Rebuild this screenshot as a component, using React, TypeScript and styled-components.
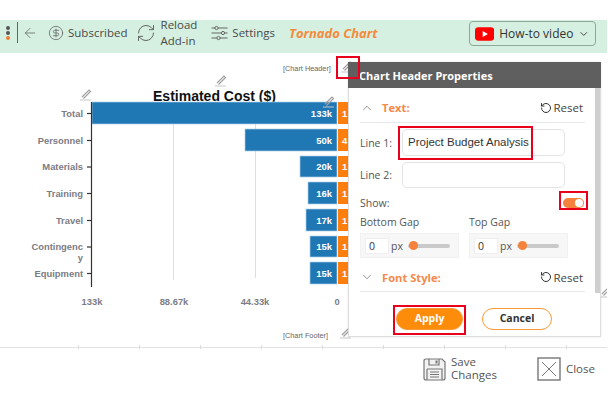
import styled, { createGlobalStyle } from 'styled-components'
import { ArrowLeft, ChevronDown, ChevronUp, CircleDollarSign, RefreshCw, RotateCcw } from 'lucide-react'

const GlobalStyle = createGlobalStyle`
    html, body {
        margin: 0;
        padding: 0;
        background: #fff;
    }
    body {
        font-family: "Open Sans", "Noto Sans", sans-serif;
        color: #444;
    }
`

const Page = styled.div`
    width: 612px;
    height: 405px;
    overflow: hidden;
    padding-top: 20px;
    box-sizing: border-box;
`

// toolbar
const Toolbar = styled.div`
    height: 33px;
    width: 607px;
    box-sizing: border-box;
    padding-bottom: 8px;
    background: #d5f0e1;
    display: flex;
    align-items: center;
    color: #4a4a4a;
    font-size: 11.5px;
`
const Kebab = styled.div`
    width: 18px;
    height: 21px;
    display: flex;
    flex-direction: column;
    align-items: center;
    justify-content: space-between;
    padding: 4px 2px 3px 0;
    box-sizing: border-box;
    border-right: 1px solid #666;
    i {
        display: block;
        width: 4px;
        height: 4px;
        border-radius: 50%;
        background: #555;
    }
    i:last-child {
        background: #f47b30;
    }
`
const ToolItem = styled.div<{ $left: number; $gap?: number }>`
    display: flex;
    align-items: center;
    margin-left: ${props => props.$left}px;
    gap: ${props => props.$gap ?? 4}px;
    white-space: nowrap;
`
const TwoLines = styled.div`
    line-height: 16px;
`
const ChartName = styled.div`
    margin-left: 14px;
    margin-top: 1px;
    font-size: 13px;
    font-weight: 700;
    font-style: italic;
    color: #f58a3c;
    white-space: nowrap;
`
const VideoButton = styled.div`
    margin-left: auto;
    margin-right: 11px;
    margin-top: 2px;
    width: 127px;
    height: 25px;
    flex: none;
    box-sizing: border-box;
    border: 1px solid #8fa79a;
    border-radius: 4px;
    display: flex;
    align-items: center;
    padding: 0 5px;
    gap: 5px;
    color: #333;
    font-size: 12px;
    white-space: nowrap;
    svg:last-child {
        margin-left: auto;
    }
`

// chart
const ChartArea = styled.div`
    position: relative;
    width: 607px;
    height: 294px;
    border-bottom: 1px solid #e2e2e2;
`
const ChartSvg = styled.svg`
    display: block;
    text {
        font-family: "Liberation Sans", Arial, sans-serif;
    }
`
const RulerTicks = styled.div`
    position: absolute;
    left: 78px;
    right: 0;
    bottom: -2px;
    height: 4px;
    background: repeating-linear-gradient(to right, #dcdcdc 0, #dcdcdc 1px, transparent 1px, transparent 61px);
`

// properties panel
const Panel = styled.div`
    position: absolute;
    left: 348px;
    top: 9px;
    width: 253px;
    height: 275px;
    background: #fff;
    box-sizing: border-box;
    border: 1px solid #ddd;
    box-shadow: 0 0 2px rgba(0, 0, 0, 0.1);
`
const PanelHeader = styled.div`
    height: 26px;
    background: #5f5f5f;
    color: #fff;
    font-size: 11px;
    font-weight: 700;
    line-height: 28px;
    padding-left: 11px;
    margin: -1px -1px 0 -1px;
`
const PanelBody = styled.div`
    width: 225px;
    margin-left: 11px;
`
const SectionRow = styled.div<{ $height: number }>`
    height: ${props => props.$height}px;
    border-bottom: 1px solid #e9e9e9;
    box-sizing: border-box;
    display: flex;
    align-items: center;
    padding-top: 5px;
    color: #666;
`
const SectionTitle = styled.div`
    margin-left: 8px;
    color: #f58a4c;
    font-size: 11.2px;
    font-weight: 700;
`
const ResetLink = styled.div`
    margin-left: auto;
    margin-right: 2px;
    display: flex;
    align-items: center;
    gap: 1px;
    font-size: 11.5px;
    color: #444;
`
const FieldRow = styled.div<{ $top: number }>`
    display: flex;
    align-items: center;
    margin-top: ${props => props.$top}px;
    font-size: 10.5px;
    color: #555;
`
const FieldLabel = styled.div`
    width: 42px;
    flex: none;
`
const TextField = styled.div<{ $height: number }>`
    width: 163px;
    height: ${props => props.$height}px;
    box-sizing: border-box;
    border: 1px solid #e4e4e4;
    border-radius: 5px;
    padding-left: 5px;
    line-height: 25px;
    font-family: "Liberation Sans", Arial, sans-serif;
    font-size: 11.5px;
    color: #333;
    white-space: nowrap;
`
const Toggle = styled.div`
    width: 21px;
    height: 10px;
    border-radius: 5px;
    background: #f4823c;
    position: relative;
    margin-left: auto;
    margin-right: 1px;
    &::after {
        content: '';
        position: absolute;
        right: 1px;
        top: 1px;
        width: 8px;
        height: 8px;
        border-radius: 50%;
        background: #fff;
    }
`
const GapGrid = styled.div`
    display: grid;
    grid-template-columns: 99px 99px;
    column-gap: 10px;
    margin-top: 5px;
    width: 240px;
`
const GapLabel = styled.div`
    font-size: 10.5px;
    line-height: 14px;
    height: 18px;
    color: #555;
`
const GapBox = styled.div`
    height: 25px;
    box-sizing: border-box;
    background: #f7f7f7;
    border: 1px solid #f1f1f1;
    display: flex;
    align-items: center;
    padding-left: 4px;
    font-size: 10.5px;
    color: #555;
`
const GapInput = styled.div`
    width: 24px;
    height: 16px;
    box-sizing: border-box;
    background: #fff;
    border: 1px solid #efefef;
    line-height: 14px;
    padding-left: 3px;
    margin-right: 2px;
    color: #333;
`
const SliderTrack = styled.div`
    position: relative;
    width: 42px;
    height: 4px;
    margin-left: 5px;
    border-radius: 2px;
    background: #c9c9c9;
    &::before {
        content: '';
        position: absolute;
        left: 1px;
        top: -2.5px;
        width: 9px;
        height: 9px;
        border-radius: 50%;
        background: #f4823c;
    }
`
const ButtonRow = styled.div`
    display: flex;
    gap: 19px;
    padding-left: 36px;
    margin-top: 16px;
`
const PanelButton = styled.div<{ $primary?: boolean }>`
    width: ${props => (props.$primary ? 67 : 70)}px;
    height: 22px;
    box-sizing: border-box;
    border-radius: 11px;
    border: 1px solid #fb9a35;
    background: ${props => (props.$primary ? '#fd8c0a' : '#fff')};
    color: ${props => (props.$primary ? '#fff' : '#333')};
    font-size: 10.5px;
    font-weight: 700;
    text-align: center;
    line-height: 19px;
`
const ScrollThumb = styled.div`
    position: absolute;
    right: 0;
    top: 25px;
    width: 5px;
    height: 205px;
    background: #cfcfcf;
`
const RedBox = styled.div<{ $l: number; $t: number; $w: number; $h: number }>`
    position: absolute;
    left: ${props => props.$l}px;
    top: ${props => props.$t}px;
    width: ${props => props.$w}px;
    height: ${props => props.$h}px;
    box-sizing: border-box;
    border: 2px solid #e8001c;
    pointer-events: none;
`

// bottom bar
const BottomBar = styled.div`
    width: 607px;
    display: flex;
    align-items: center;
    color: #555;
    font-size: 11.5px;
    padding: 9px 0 0 423px;
    box-sizing: border-box;
`
const BottomAction = styled.div<{ $left?: number }>`
    display: flex;
    align-items: center;
    gap: 5px;
    margin-left: ${props => props.$left ?? 0}px;
`
const ActionText = styled.div`
    line-height: 13px;
    margin-top: -2px;
`

const bars = [
    { name: 'Total', value: '133k', x: 92, y: 102, h: 22, lines: ['Total'] },
    { name: 'Personnel', value: '50k', x: 245, y: 129, h: 22, lines: ['Personnel'], right: '4' },
    { name: 'Materials', value: '20k', x: 300, y: 156, h: 21, lines: ['Materials'] },
    { name: 'Training', value: '16k', x: 308, y: 182, h: 22, lines: ['Training'] },
    { name: 'Travel', value: '17k', x: 306, y: 209, h: 22, lines: ['Travel'] },
    { name: 'Contingency', value: '15k', x: 310, y: 236, h: 21, lines: ['Contingenc', 'y'] },
    { name: 'Equipment', value: '15k', x: 310, y: 262, h: 22, lines: ['Equipment'] },
]

const axisLabels = [
    { text: '133k', x: 92 },
    { text: '88.67k', x: 174 },
    { text: '44.33k', x: 255 },
    { text: '0', x: 337 },
]

const Pencil = ({ x, y }: { x: number; y: number }) => (
    <g transform={`translate(${x} ${y})`} fill="none" stroke="#a0a0a0">
        <path d="M2 8 L9 1 L10.5 2.5 L3.5 9.5" strokeWidth="1.2" />
        <path d="M0 11 H11" strokeWidth="1" stroke="#c8c8c8" />
    </g>
)

const CHART_TOP = 53

const Chart = () => (
    <ChartSvg width="607" height="294" viewBox={`0 ${CHART_TOP} 607 294`}>
        <text x="283" y="70.5" fontSize="7.3" fill="#666">[Chart Header]</text>
        <text x="283" y="337.5" fontSize="7.3" fill="#666">[Chart Footer]</text>
        <text x="214.5" y="100.5" textAnchor="middle" fontSize="14" fontWeight="700" fill="#111">Estimated Cost ($)</text>
        <line x1="173.5" x2="173.5" y1="102" y2="280" stroke="#dedede" />
        <line x1="255.5" x2="255.5" y1="102" y2="278" stroke="#dedede" />
        {bars.map(bar => {
            const mid = bar.y + bar.h / 2
            return (
                <g key={bar.name}>
                    <rect x={bar.x} y={bar.y} width={337 - bar.x} height={bar.h} fill="#1f77b4" stroke="#a9cfe8" strokeWidth="0.7" />
                    <rect x="338" y={bar.y} width="20" height={bar.h} fill="#ff7f0e" />
                    <text x="332" y={mid + 3.5} textAnchor="end" fontSize="9.5" fontWeight="700" fill="#fff">{bar.value}</text>
                    <text x="342" y={mid + 3.5} fontSize="9.5" fontWeight="700" fill="#fff">{bar.right ?? '1'}</text>
                    <line x1="87" x2="92" y1={mid + 0.5} y2={mid + 0.5} stroke="#333" strokeWidth="1.2" />
                    {bar.lines.map((line, i) => (
                        <text key={line} x="83" y={mid + 3.5 + i * 11} textAnchor="end" fontSize="9.4" fontWeight="700" fill="#7c7c84">{line}</text>
                    ))}
                </g>
            )
        })}
        <line x1="91.5" x2="91.5" y1="102" y2="287" stroke="#333" strokeWidth="1.2" />
        {axisLabels.map(label => (
            <text key={label.text} x={label.x} y="305" textAnchor="middle" fontSize="9.4" fontWeight="700" fill="#7c7c84">{label.text}</text>
        ))}
        <Pencil x={80} y={89} />
        <Pencil x={215} y={75} />
        <Pencil x={323} y={96} />
        <Pencil x={341} y={61} />
        <Pencil x={340} y={327} />
        <Pencil x={600} y={286} />
    </ChartSvg>
)

const SettingsIcon = () => (
    <svg width="17" height="16" viewBox="0 0 17 16" fill="none" stroke="#666" strokeWidth="1">
        <path d="M0.5 3 H4 M7 3 H16.5 M0.5 8 H10.5 M13.5 8 H16.5 M0.5 13 H6 M9 13 H16.5" />
        <circle cx="5.5" cy="3" r="1.6" />
        <circle cx="12" cy="8" r="1.6" />
        <circle cx="7.5" cy="13" r="1.6" />
    </svg>
)

const YoutubeIcon = () => (
    <svg width="20" height="14" viewBox="0 0 20 14">
        <rect width="20" height="14" rx="3.5" fill="#f00" />
        <path d="M8 3.8 L13.4 7 L8 10.2 Z" fill="#fff" />
    </svg>
)

const SaveIcon = () => (
    <svg width="23" height="23" viewBox="0 0 23 23" fill="none" stroke="#777" strokeWidth="1.2">
        <path d="M1 3 Q1 1 3 1 H19 L22 4 V20 Q22 22 20 22 H3 Q1 22 1 20 Z" fill="#f2f2f2" />
        <path d="M6 1 V7 H16 V1" />
        <rect x="12.5" y="2.5" width="2" height="3" fill="#777" stroke="none" />
        <path d="M4 11 H19 V22 M4 11 V22 M7 14 H16 M7 16.5 H16 M7 19 H16" />
    </svg>
)

const CloseIcon = () => (
    <svg width="24" height="24" viewBox="0 0 24 24" fill="none" stroke="#777">
        <rect x="1" y="1" width="22" height="22" strokeWidth="1.4" />
        <path d="M5 5 L19 19 M19 5 L5 19" strokeWidth="1" />
    </svg>
)

const GapControl = ({ label }: { label: string }) => (
    <div>
        <GapLabel>{label}</GapLabel>
        <GapBox>
            <GapInput>0</GapInput>
            px
            <SliderTrack />
        </GapBox>
    </div>
)

const App = () => {
    return <Page>
        <GlobalStyle />
        <Toolbar>
            <Kebab><i /><i /><i /></Kebab>
            <ToolItem $left={4}><ArrowLeft size={16} strokeWidth={1.2} color="#666" /></ToolItem>
            <ToolItem $left={10}><CircleDollarSign size={16} strokeWidth={1.2} color="#666" />Subscribed</ToolItem>
            <ToolItem $left={8} $gap={5}><RefreshCw size={20} strokeWidth={1.2} color="#666" /><TwoLines>Reload<br />Add-in</TwoLines></ToolItem>
            <ToolItem $left={14}><SettingsIcon />Settings</ToolItem>
            <ChartName>Tornado Chart</ChartName>
            <VideoButton>
                <YoutubeIcon />
                How-to video
                <ChevronDown size={12} color="#444" />
            </VideoButton>
        </Toolbar>
        <ChartArea>
            <Chart />
            <RulerTicks />
            <Panel>
                <PanelHeader>Chart Header Properties</PanelHeader>
                <PanelBody>
                    <SectionRow $height={35}>
                        <ChevronUp size={14} strokeWidth={1.2} />
                        <SectionTitle>Text:</SectionTitle>
                        <ResetLink><RotateCcw size={12} color="#333" />Reset</ResetLink>
                    </SectionRow>
                    <FieldRow $top={6}><FieldLabel>Line 1:</FieldLabel><TextField $height={27}>Project Budget Analysis</TextField></FieldRow>
                    <FieldRow $top={6}><FieldLabel>Line 2:</FieldLabel><TextField $height={26} /></FieldRow>
                    <FieldRow $top={8}>Show:<Toggle /></FieldRow>
                    <GapGrid>
                        <GapControl label="Bottom Gap" />
                        <GapControl label="Top Gap" />
                    </GapGrid>
                    <SectionRow $height={34}>
                        <ChevronDown size={14} strokeWidth={1.2} />
                        <SectionTitle>Font Style:</SectionTitle>
                        <ResetLink><RotateCcw size={12} color="#333" />Reset</ResetLink>
                    </SectionRow>
                    <ButtonRow>
                        <PanelButton $primary>Apply</PanelButton>
                        <PanelButton>Cancel</PanelButton>
                    </ButtonRow>
                </PanelBody>
                <ScrollThumb />
            </Panel>
            <RedBox $l={336} $t={3} $w={24} $h={23} />
            <RedBox $l={398} $t={73} $w={135} $h={34} />
            <RedBox $l={559} $t={138} $w={29} $h={19} />
            <RedBox $l={393} $t={252} $w={73} $h={30} />
        </ChartArea>
        <BottomBar>
            <BottomAction><SaveIcon /><ActionText>Save<br />Changes</ActionText></BottomAction>
            <BottomAction $left={40}><CloseIcon /><ActionText>Close</ActionText></BottomAction>
        </BottomBar>
    </Page>
}
export default App
